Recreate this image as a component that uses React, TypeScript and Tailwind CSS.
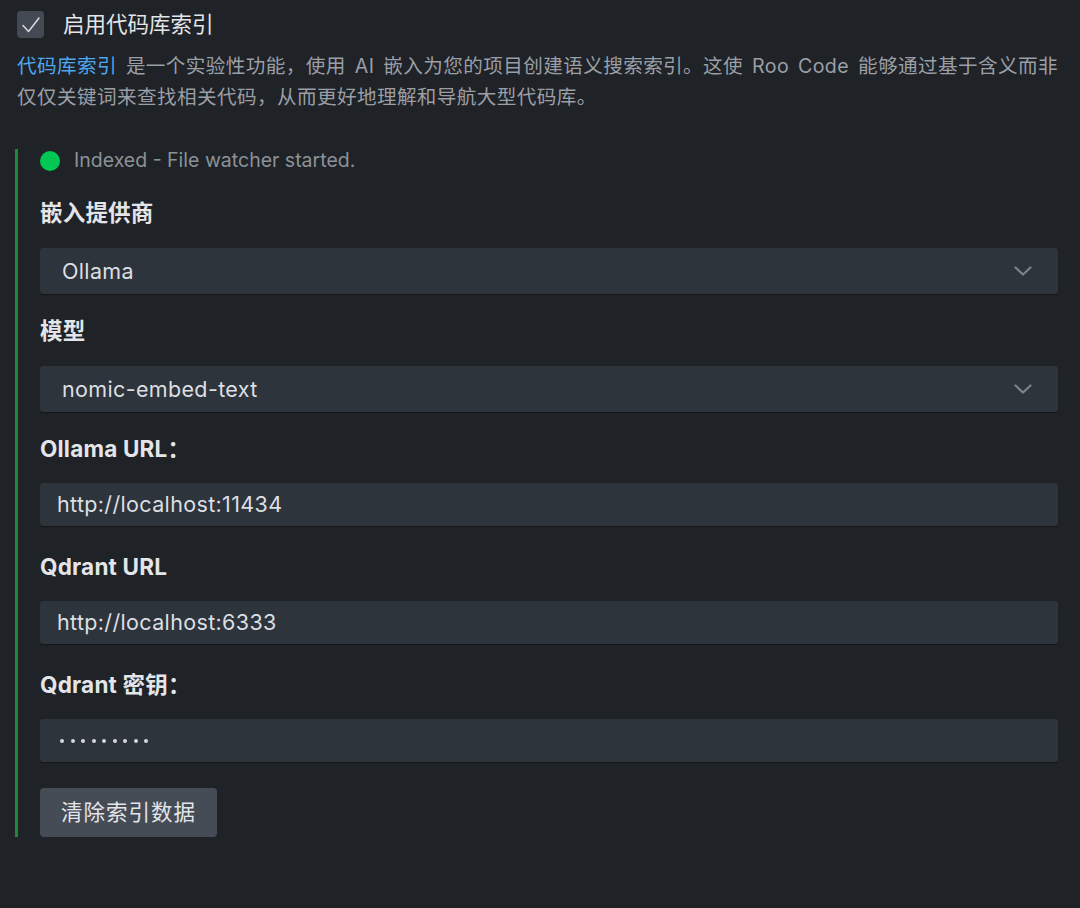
const font = { fontFamily: '"Inter", "Noto Sans CJK SC", sans-serif' };

function Chevron() {
  return (
    <svg width="18" height="10" viewBox="0 0 18 10" fill="none" className="shrink-0">
      <path d="M1.5 1.5 L9 8.5 L16.5 1.5" stroke="#7d838b" strokeWidth="2.2" strokeLinecap="round" strokeLinejoin="round" />
    </svg>
  );
}

function Field({ label, children }: { label: string; children: React.ReactNode }) {
  return (
    <div className="flex flex-col">
      <div className="h-[30px] flex items-center text-[22.5px] tracking-[0.2px] font-bold text-[#e3e5e8]">{label}</div>
      {children}
    </div>
  );
}

function Select({ value }: { value: string }) {
  return (
    <div className="mt-[20px] h-[46px] flex items-center justify-between rounded-[3px] bg-[#2e343b] pl-[22px] pr-[26px] shadow-[0_1px_1px_rgba(0,0,0,0.35)]">
      <span className="text-[21.5px] tracking-[0.35px] text-[#dcdfe3]">{value}</span>
      <Chevron />
    </div>
  );
}

function Input({ children }: { children: React.ReactNode }) {
  return (
    <div className="mt-[19px] h-[43px] flex items-center rounded-[3px] bg-[#2e343b] pl-[17px] shadow-[0_1px_1px_rgba(0,0,0,0.35)]">
      {children}
    </div>
  );
}

export default function App() {
  return (
    <div style={font} className="min-h-[908px] w-full bg-[#1f2227] px-[15px] pt-[11px] pb-[70px]">
      <div className="flex items-center gap-[19px] pl-[2px]">
        <div className="w-[27px] h-[27px] rounded-[4px] bg-[#434a53] flex items-center justify-center">
          <svg width="20" height="18" viewBox="0 0 20 18" fill="none">
            <path d="M2 9.5 L7.5 15.5 L18 2" stroke="#d7dadf" strokeWidth="1.5" strokeLinecap="round" strokeLinejoin="round" />
          </svg>
        </div>
        <span className="text-[21.5px] text-[#e3e5e8] leading-[27px]">启用代码库索引</span>
      </div>

      <p className="mt-[13px] pl-[2px] text-[19.6px] tracking-[0.4px] [word-spacing:3px] leading-[31px] text-[#9a9fa6]">
        <span className="text-[#4ea7ee]">代码库索引</span> 是一个实验性功能，使用 AI 嵌入为您的项目创建语义搜索索引。这使 Roo Code 能够通过基于含义而非
        <br />
        仅仅关键词来查找相关代码，从而更好地理解和导航大型代码库。
      </p>

      <div className="mt-[36px] border-l-[3px] border-[#1e8a34] pl-[22px] pr-[7px]">
        <div className="h-[24px] flex items-center gap-[14px]">
          <span className="w-[20px] h-[20px] rounded-full bg-[#00c853]" />
          <span className="text-[19.5px] text-[#8d9298]">Indexed - File watcher started.</span>
        </div>

        <div className="mt-[25px] flex flex-col gap-[22px]">
          <Field label="嵌入提供商">
            <Select value="Ollama" />
          </Field>
          <Field label="模型">
            <Select value="nomic-embed-text" />
          </Field>
          <div className="flex flex-col gap-[26px]">
            <Field label="Ollama URL：">
              <Input>
                <span className="text-[21.5px] tracking-[0.35px] text-[#dcdfe3]">http://localhost:11434</span>
              </Input>
            </Field>
            <Field label="Qdrant URL">
              <Input>
                <span className="text-[21.5px] tracking-[0.35px] text-[#dcdfe3]">http://localhost:6333</span>
              </Input>
            </Field>
            <Field label="Qdrant 密钥：">
              <Input>
                <span className="flex items-center gap-[6.5px] pl-[3px]">
                  {Array.from({ length: 9 }).map((_, i) => (
                    <span key={i} className="w-[4px] h-[4px] rounded-full bg-[#d4d7db]" />
                  ))}
                </span>
              </Input>
            </Field>
          </div>
        </div>

        <button className="mt-[26px] h-[49px] px-[21px] rounded-[4px] bg-[#454c55] text-[21.5px] tracking-[1px] text-[#e3e5e8]">
          清除索引数据
        </button>
      </div>
    </div>
  );
}
